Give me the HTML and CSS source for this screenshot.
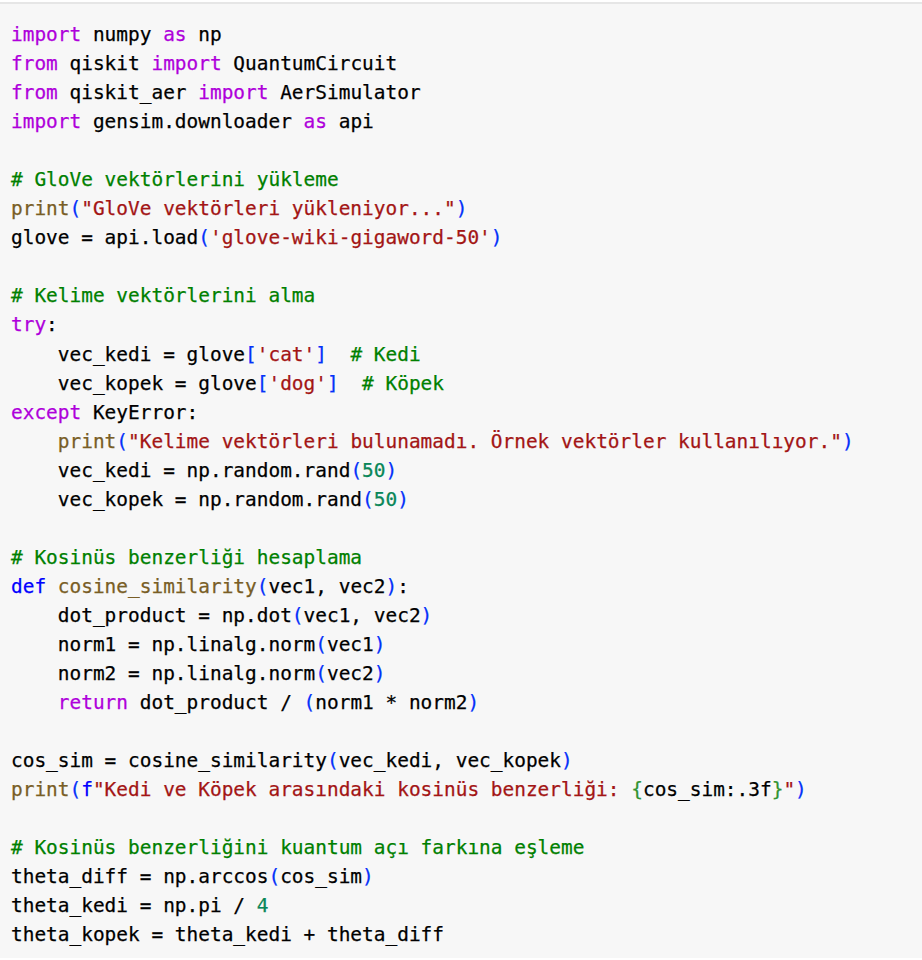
FILE: index.html
```html
<!DOCTYPE html>
<html lang="tr">
<head>
<meta charset="utf-8">
<title>Code</title>
<link rel="stylesheet" href="styles.css">
</head>
<body>
<div class="cell">
<pre class="code"><span class="kw">import</span> numpy <span class="kw">as</span> np
<span class="kw">from</span> qiskit <span class="kw">import</span> QuantumCircuit
<span class="kw">from</span> qiskit_aer <span class="kw">import</span> AerSimulator
<span class="kw">import</span> gensim.downloader <span class="kw">as</span> api

<span class="cm"># GloVe vektörlerini yükleme</span>
<span class="fn">print</span><span class="b1">(</span><span class="st">"GloVe vektörleri yükleniyor..."</span><span class="b1">)</span>
glove = api.load<span class="b1">(</span><span class="st">'glove-wiki-gigaword-50'</span><span class="b1">)</span>

<span class="cm"># Kelime vektörlerini alma</span>
<span class="kw">try</span>:
    vec_kedi = glove<span class="b1">[</span><span class="st">'cat'</span><span class="b1">]</span>  <span class="cm"># Kedi</span>
    vec_kopek = glove<span class="b1">[</span><span class="st">'dog'</span><span class="b1">]</span>  <span class="cm"># Köpek</span>
<span class="kw">except</span> KeyError:
    <span class="fn">print</span><span class="b1">(</span><span class="st">"Kelime vektörleri bulunamadı. Örnek vektörler kullanılıyor."</span><span class="b1">)</span>
    vec_kedi = np.random.rand<span class="b1">(</span><span class="nm">50</span><span class="b1">)</span>
    vec_kopek = np.random.rand<span class="b1">(</span><span class="nm">50</span><span class="b1">)</span>

<span class="cm"># Kosinüs benzerliği hesaplama</span>
<span class="df">def</span> <span class="fn">cosine_similarity</span><span class="b1">(</span>vec1, vec2<span class="b1">)</span>:
    dot_product = np.dot<span class="b1">(</span>vec1, vec2<span class="b1">)</span>
    norm1 = np.linalg.norm<span class="b1">(</span>vec1<span class="b1">)</span>
    norm2 = np.linalg.norm<span class="b1">(</span>vec2<span class="b1">)</span>
    <span class="kw">return</span> dot_product / <span class="b1">(</span>norm1 * norm2<span class="b1">)</span>

cos_sim = cosine_similarity<span class="b1">(</span>vec_kedi, vec_kopek<span class="b1">)</span>
<span class="fn">print</span><span class="b1">(</span><span class="df">f</span><span class="st">"Kedi ve Köpek arasındaki kosinüs benzerliği: </span><span class="b2">{</span>cos_sim:.3f<span class="b2">}</span><span class="st">"</span><span class="b1">)</span>

<span class="cm"># Kosinüs benzerliğini kuantum açı farkına eşleme</span>
theta_diff = np.arccos<span class="b1">(</span>cos_sim<span class="b1">)</span>
theta_kedi = np.pi / <span class="nm">4</span>
theta_kopek = theta_kedi + theta_diff</pre>
</div>
</body>
</html>
```
FILE: styles.css
```css
html, body {
  margin: 0;
  padding: 0;
  background: #ffffff;
}

.cell {
  margin-top: 2px;
  border-top: 2px solid #e6e6e6;
  background: #f7f7f7;
  min-height: 956px;
  box-sizing: border-box;
  padding: 16px 0 0 11px;
}

.code {
  margin: 0;
  font-family: "DejaVu Sans Mono", "Liberation Mono", monospace;
  font-size: 19.45px;
  line-height: 29.05px;
  color: #000000;
  white-space: pre;
  -webkit-text-stroke: 0.25px currentColor;
}

.kw { color: #af00db; }
.df { color: #0000ff; }
.fn { color: #795e26; }
.st { color: #a31515; }
.cm { color: #008000; }
.nm { color: #098658; }
.b1 { color: #0431fa; }
.b2 { color: #319331; }
```
